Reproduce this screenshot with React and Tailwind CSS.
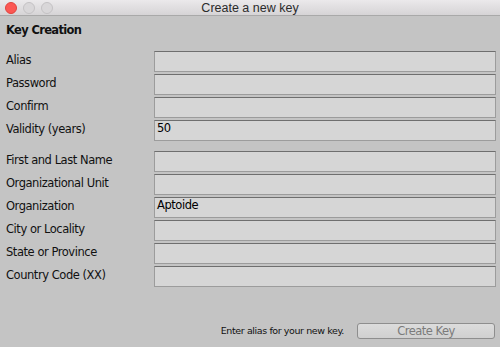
export default function App() {
  const group1 = [
    ["Alias", ""],
    ["Password", ""],
    ["Confirm", ""],
    ["Validity (years)", "50"],
  ];
  const group2 = [
    ["First and Last Name", ""],
    ["Organizational Unit", ""],
    ["Organization", "Aptoide"],
    ["City or Locality", ""],
    ["State or Province", ""],
    ["Country Code (XX)", ""],
  ];
  const Row = ({ label, value }) => (
    <div className="flex h-[21px] items-start">
      <div className="w-[148px] shrink-0 pt-[2px] leading-[14px] text-[11.5px] tracking-[-0.45px] text-[#111111]">{label}</div>
      <div className="h-[21px] w-[342px] shrink-0 border border-[#9c9c9c] border-t-[#6f6f6f] bg-[#d6d6d6] pl-[2px] leading-[14px] text-[11.5px] tracking-[-0.45px] text-black">
        {value}
      </div>
    </div>
  );
  return (
    <div className="flex h-[347px] w-[500px] flex-col overflow-hidden bg-[#c4c4c4] font-['DejaVu_Sans',sans-serif]">
      <div className="relative flex h-[16px] shrink-0 items-center justify-center border-b border-[#a9a9a9] bg-gradient-to-b from-[#ebe9eb] to-[#d6d4d6]">
        <div className="absolute left-[5px] top-[2px] flex gap-[6px]">
          <div className="h-[12px] w-[12px] rounded-full border border-[#e0443e] bg-[#fc5753]" />
          <div className="h-[12px] w-[12px] rounded-full border border-[#c4c2c4] bg-[#d9d7d9]" />
          <div className="h-[12px] w-[12px] rounded-full border border-[#c4c2c4] bg-[#d9d7d9]" />
        </div>
        <span className="font-['Liberation_Sans',sans-serif] text-[12.5px] leading-[14px] text-[#2b2b2b]">Create a new key</span>
      </div>
      <div className="px-[6px]">
        <div className="mt-[6px] h-[16px] text-[11.5px] font-bold leading-[16px] tracking-[-0.65px] text-[#111111]">Key Creation</div>
        <div className="mt-[13px] flex flex-col gap-[2px]">
          {group1.map(([l, v]) => (
            <Row key={l} label={l} value={v} />
          ))}
        </div>
        <div className="mt-[10px] flex flex-col gap-[2px]">
          {group2.map(([l, v]) => (
            <Row key={l} label={l} value={v} />
          ))}
        </div>
      </div>
      <div className="mt-auto mb-[8px] flex items-center justify-end pr-[5px]">
        <span className="mr-[13px] text-[9.5px] tracking-[-0.4px] text-[#111111]">Enter alias for your new key.</span>
        <div className="flex h-[16px] w-[138px] items-center justify-center rounded-[3px] border border-[#8e8e8e] bg-gradient-to-b from-[#dcdcdc] to-[#d0d0d0] text-[11.5px] leading-[14px] tracking-[-0.5px] text-[#7b7b7b]">
          Create Key
        </div>
      </div>
    </div>
  );
}
